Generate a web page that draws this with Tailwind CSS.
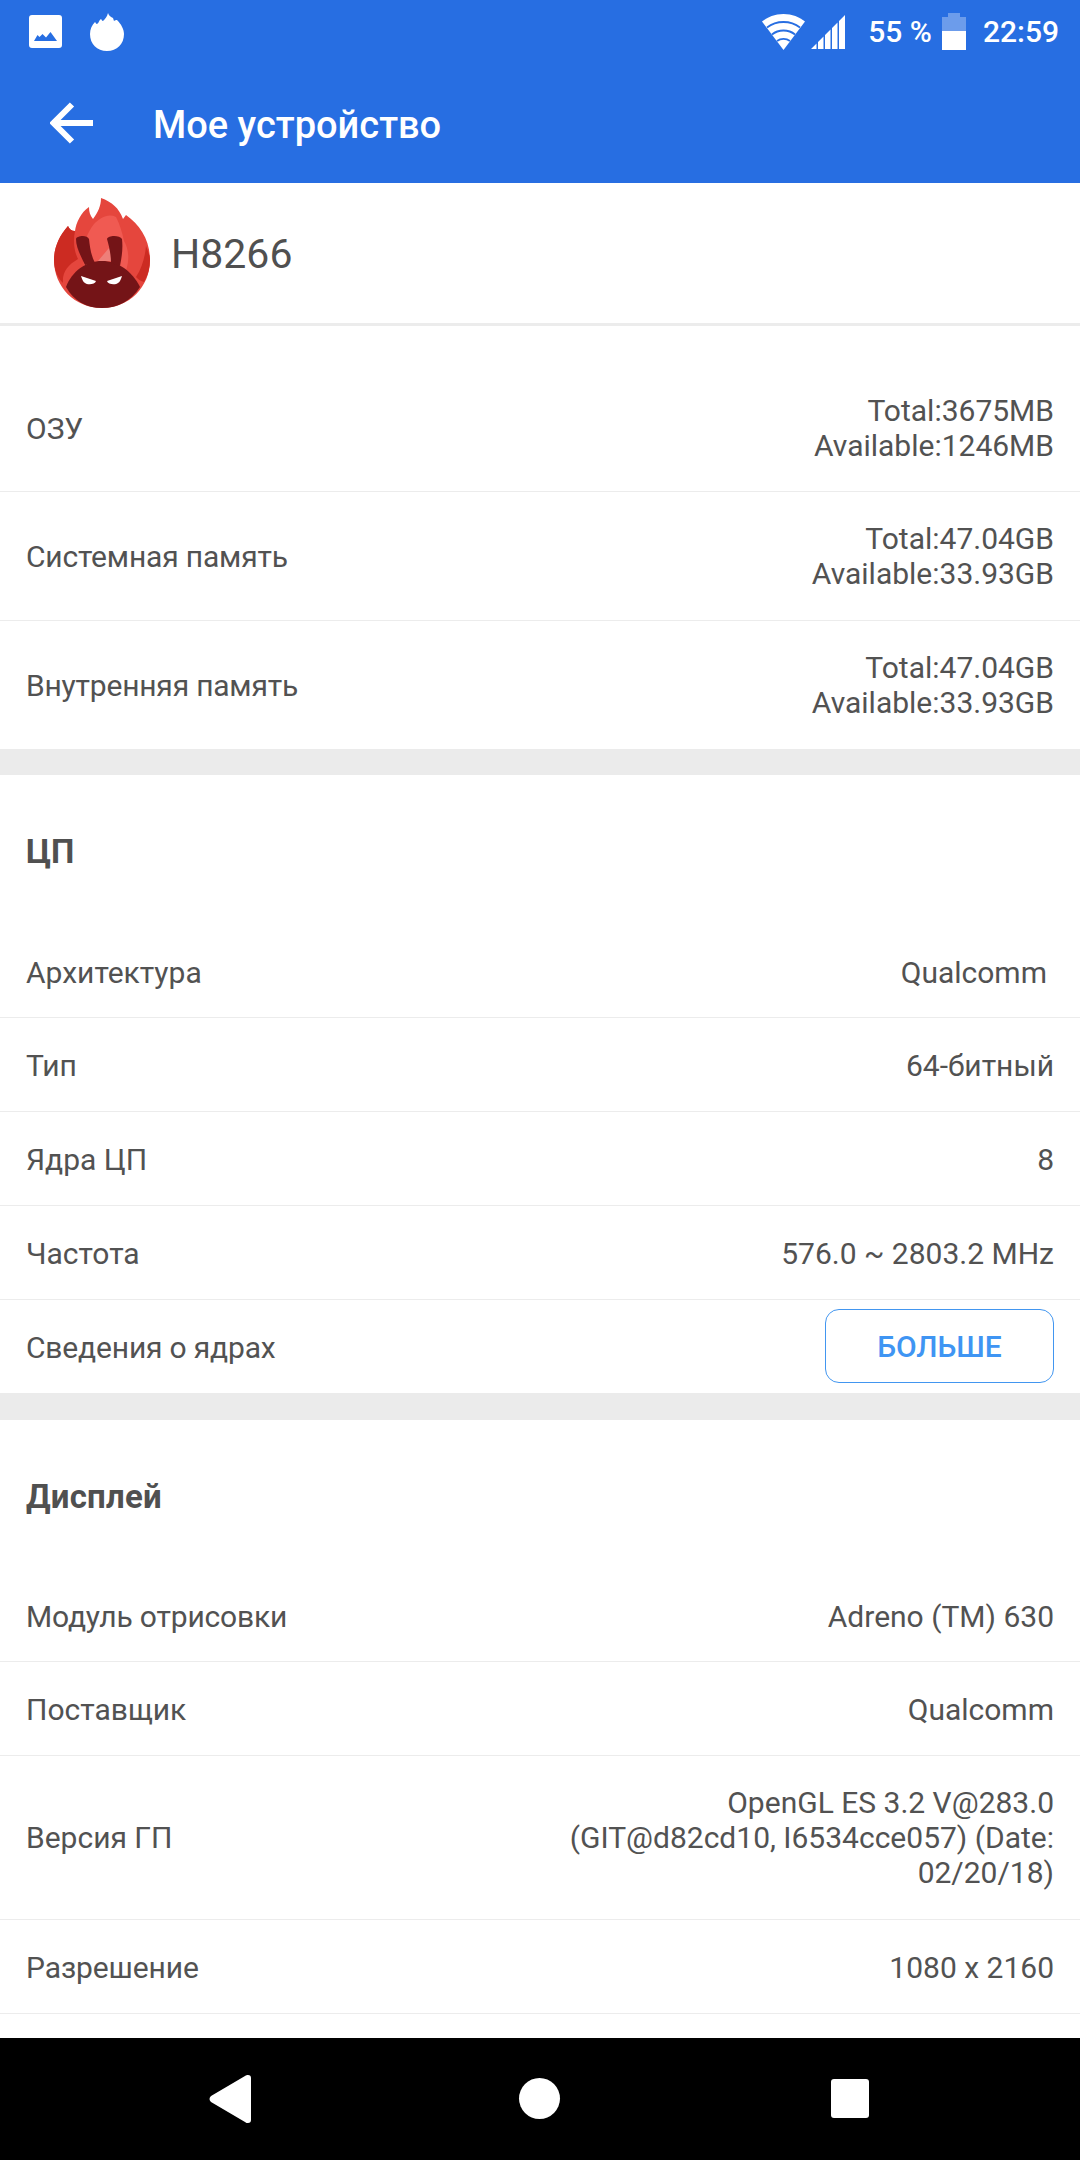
<!DOCTYPE html>
<html lang="ru">
<head>
  <meta charset="UTF-8"/>
  <meta name="viewport" content="width=device-width, initial-scale=1.0"/>
  <title>Мое устройство</title>
  <script src="https://cdn.jsdelivr.net/npm/@tailwindcss/browser@4"></script>
</head>
<body class="bg-white font-['Roboto',sans-serif] text-[#525252] text-[30px] leading-[35px]">
<div class="w-[1080px] h-[2160px] flex flex-col overflow-hidden">

  <!-- status bar + toolbar -->
  <header class="h-[183px] shrink-0 bg-[#276ee2] text-white">
    <div class="h-[63px] flex items-center pl-[29px] pr-[21px]">
      <svg class="w-[33px] h-[33px]" viewBox="0 0 33 33"><path fill="#fff" fill-rule="evenodd" d="M3 0h27a3 3 0 0 1 3 3v27a3 3 0 0 1-3 3H3a3 3 0 0 1-3-3V3a3 3 0 0 1 3-3zM5 26h23l-6.500-9-4.500 5.500-3.500-3.500-3 3-2-2z"/></svg>
      <svg class="w-[34px] h-[38px] ml-[28px]" viewBox="0 0 34 38"><path fill="#fff" d="M18 0c1 3 3 4 5 5l1 3c1-1 2-1 3-1 4 4 7 9 7 14 0 10-7 17-17 17S0 31 0 21c0-5 2-9 5-12 1 1 1 2 2 2 2-1 2-4 4-5 1 1 1 2 2 2 2-2 4-4 5-8z"/></svg>
      <div class="flex-1"></div>
      <svg class="w-[43px] h-[36px]" viewBox="0 0 43 36">
        <path fill="#fff" d="M21.500 0C30 0 37.500 3 43 7.500L21.500 36 0 7.500C5.500 3 13 0 21.500 0z"/>
        <path fill="none" stroke="#276ee2" stroke-width="1.800" d="M5 13.500C9.500 10 15 8 21.500 8S33.500 10 38 13.500M10 20.500c3-2.500 7-4 11.500-4s8.500 1.500 11.500 4M15 27c2-1.500 4-2.200 6.500-2.200S26 25.500 28 27"/>
      </svg>
      <svg class="w-[34px] h-[34px] ml-[6px]" viewBox="0 0 34 34"><path fill="#fff" d="M0 34l5.500-5.500V34zM7 34v-7l5.500-5.500V34zM14 34V20l5.500-5.500V34zM21 34V13l5.500-5.500V34zM28 34V6l6-6v34z"/></svg>
      <span class="ml-[23px] font-medium">55 %</span>
      <svg class="w-[24px] h-[37px] ml-[10px]" viewBox="0 0 24 37"><path fill="#fff" fill-opacity=".32" d="M0 37V4h6V0h12v4h6v33z"/><path fill="#fff" d="M0 18h24v19H0z"/></svg>
      <span class="ml-[17px] font-medium">22:59</span>
    </div>
    <div class="h-[120px] flex items-center pl-[50px]">
      <svg class="w-[43px] h-[42px]" viewBox="0 0 43 42"><path fill="none" stroke="#fff" stroke-width="6" d="M43 21H5M22 2.500 3.500 21 22 39.500"/></svg>
      <h1 class="ml-[60px] mt-[3px] text-[38px] leading-[44px] font-medium">Мое устройство</h1>
    </div>
  </header>

  <!-- device -->
  <div class="h-[143px] shrink-0 flex items-center pl-[53px] border-b-[3px] border-[#ececec]">
    <svg class="w-[98px] h-[110px]" viewBox="0 0 96 110">
      <path fill="#e5463d" d="M47 0C58 4 65 10 69 21L72 17C86 27 96 42 96 62C96 89 75 110 48 110S0 89 0 62C0 50 5 38 14 28C15 31 18 33 21 33C22 25 27 14 35 9C35 14 36 17 39 21C44 14 47 8 47 0z"/>
      <path fill="#f05a52" d="M40 26c6-6 14-11 22-7 4 8 6 15 8 24 6 10 6 25-2 38H34c-8-18-6-40 6-55z"/>
      <path fill="#cc2b22" d="M21 33c-2 10-1 20 3 28-10 6-16 13-15 24C3 79 0 71 0 62c0-12 5-24 14-34 1 3 4 5 7 5z"/>
      <path fill="#cc2b22" d="M92 48c3 8 4 10 4 14 0 8-2 15-6 22-4-1-6-3-8-5 6-9 9-20 10-31z"/>
      <path fill="#ee7f79" d="M55 50l-11 13h16z"/>
      <path fill="#741417" d="M12 89C18 73 32 63 48 63S78 73 86 89C77 103 64 110 48 110S20 103 12 89z"/>
      <path fill="#741417" d="M22 41C22 38 33 36 35 41C36 50 37 57 41 65L31 67C27 58 22 50 22 41z"/>
      <path fill="#741417" d="M53 41C54 37 66 37 68 41C69 50 68 58 66 68L57 65C57 56 55 48 53 41z"/>
      <path fill="#fff" d="M27 78L42 83C41 87 33 87 31 85C29 84 28 81 27 78zM68 78L53 83C54 87 62 87 64 85C66 84 67 81 68 78z"/>
    </svg>
    <span class="ml-[20px] mt-[2px] text-[41px] leading-[48px] text-[#505050]">H8266</span>
  </div>

  <!-- memory -->
  <section class="pt-[38px]">
    <div class="h-[128px] px-[26px] flex items-center justify-between border-b border-[#ececec]">
      <span class="mt-[2px]">ОЗУ</span>
      <div class="text-right"><p>Total:3675MB</p><p>Available:1246MB</p></div>
    </div>
    <div class="h-[129px] px-[26px] flex items-center justify-between border-b border-[#ececec]">
      <span class="tracking-[-0.17px]">Системная память</span>
      <div class="text-right"><p>Total:47.04GB</p><p>Available:33.93GB</p></div>
    </div>
    <div class="h-[128px] px-[26px] flex items-center justify-between">
      <span class="tracking-[-0.2px]">Внутренняя память</span>
      <div class="text-right"><p>Total:47.04GB</p><p>Available:33.93GB</p></div>
    </div>
  </section>
  <div class="h-[26px] shrink-0 bg-[#ebebeb]"></div>

  <!-- cpu -->
  <section>
    <h2 class="h-[152px] px-[26px] flex items-center text-[33px] font-bold text-[#505050]">ЦП</h2>
    <div class="h-[91px] px-[26px] flex items-center justify-between border-b border-[#ececec]">
      <span>Архитектура</span><span class="pr-[7px]">Qualcomm</span>
    </div>
    <div class="h-[94px] px-[26px] pt-[2px] flex items-center justify-between border-b border-[#ececec]">
      <span>Тип</span><span>64-битный</span>
    </div>
    <div class="h-[94px] px-[26px] pt-[2px] flex items-center justify-between border-b border-[#ececec]">
      <span>Ядра ЦП</span><span>8</span>
    </div>
    <div class="h-[94px] px-[26px] pt-[2px] flex items-center justify-between border-b border-[#ececec]">
      <span>Частота</span><span>576.0 ~ 2803.2 MHz</span>
    </div>
    <div class="h-[93px] px-[26px] flex items-center justify-between">
      <span class="mt-[2px] tracking-[-0.17px]">Сведения о ядрах</span>
      <button class="w-[229px] h-[74px] mt-[-1px] rounded-[14px] border border-[#4296f0] text-[#3f95f3] font-medium">БОЛЬШЕ</button>
    </div>
  </section>
  <div class="h-[27px] shrink-0 bg-[#ebebeb]"></div>

  <!-- display -->
  <section class="flex-1">
    <h2 class="h-[152px] px-[26px] flex items-center text-[33px] font-bold text-[#505050] tracking-[0.2px]">Дисплей</h2>
    <div class="h-[90px] px-[26px] flex items-center justify-between border-b border-[#ececec]">
      <span class="tracking-[-0.17px]">Модуль отрисовки</span><span>Adreno (TM) 630</span>
    </div>
    <div class="h-[94px] px-[26px] pt-[2px] flex items-center justify-between border-b border-[#ececec]">
      <span>Поставщик</span><span>Qualcomm</span>
    </div>
    <div class="h-[164px] px-[26px] flex items-center justify-between border-b border-[#ececec]">
      <span>Версия ГП</span>
      <p class="w-[520px] text-right">OpenGL ES 3.2 V@283.0 (GIT@d82cd10, I6534cce057) (Date: 02/20/18)</p>
    </div>
    <div class="h-[94px] px-[26px] pt-[2px] flex items-center justify-between border-b border-[#ececec]">
      <span class="tracking-[-0.1px]">Разрешение</span><span>1080 x 2160</span>
    </div>
  </section>

  <!-- nav bar -->
  <nav class="h-[122px] shrink-0 bg-black flex items-center">
    <div class="w-[1080px] relative h-full">
      <svg class="absolute left-[209px] top-[37px] w-[42px] h-[48px]" viewBox="0 0 42 48"><path fill="#fff" d="M39 0c2 0 3 1 3 3v42c0 2-1 3-3 3-1 0-2 0-3-1L2 27c-2-2-2-4 0-6L36 1c1-1 2-1 3-1z"/></svg>
      <div class="absolute left-[519px] top-[40px] w-[41px] h-[41px] rounded-full bg-white"></div>
      <div class="absolute left-[831px] top-[41px] w-[38px] h-[39px] rounded-[3px] bg-white"></div>
    </div>
  </nav>
</div>
</body>
</html>
